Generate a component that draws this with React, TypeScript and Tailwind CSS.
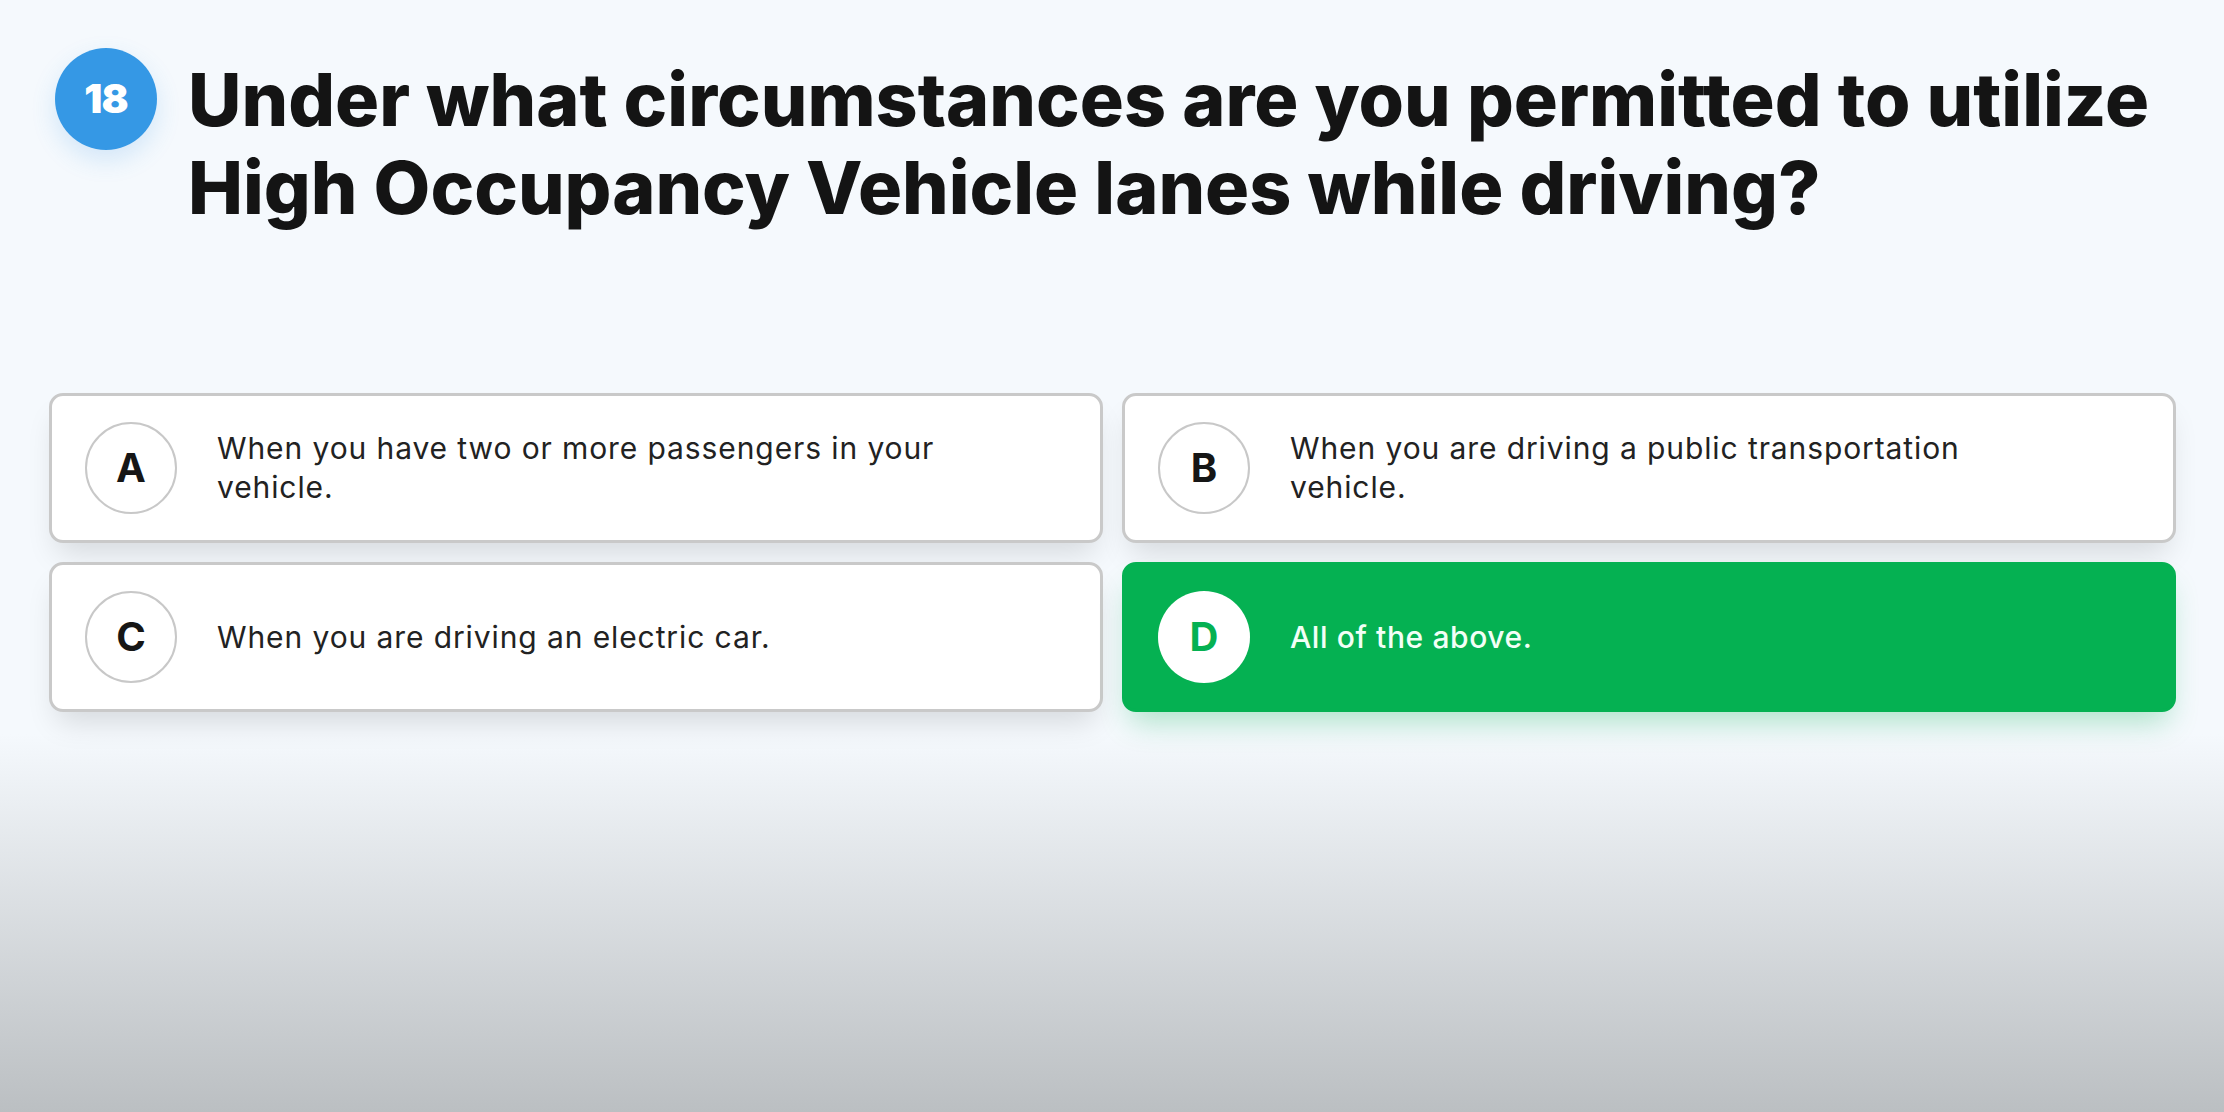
const options = [
  { letter: "A", lines: ["When you have two or more passengers in your", "vehicle."] },
  { letter: "B", lines: ["When you are driving a public transportation", "vehicle."] },
  { letter: "C", lines: ["When you are driving an electric car."] },
  { letter: "D", lines: ["All of the above."], correct: true },
];

export default function App() {
  return (
    <div className="flex h-[1112px] w-full flex-col bg-[linear-gradient(to_bottom,#f5f9fd_0%,#f5f9fd_66%,#bbbfc2_100%)] font-['Inter',sans-serif]">
      {/* QUESTION HEADER */}
      <div className="flex items-start gap-[31px] pl-[55px] pt-[48px]">
        <div className="flex h-[102px] w-[102px] shrink-0 items-center justify-center rounded-full bg-[#3598e5] text-[40px] font-black tracking-[-0.02em] text-white shadow-[0_10px_24px_rgba(53,152,229,0.18)]">
          18
        </div>
        <h1 className="mt-[8px] text-[73.5px] font-extrabold leading-[88px] text-[#141414]">
          Under what circumstances are you permitted to utilize
          <br />
          High Occupancy Vehicle lanes while driving?
        </h1>
      </div>

      {/* ANSWER OPTIONS */}
      <div className="mt-[161px] grid grid-cols-2 gap-[19px] pl-[49px] pr-[48px]">
        {options.map((opt) => (
          <div
            key={opt.letter}
            className={
              opt.correct
                ? "flex h-[150px] items-center gap-[40px] rounded-[14px] border-[3px] border-[#05b152] bg-[#05b152] pl-[33px] shadow-[0_18px_30px_-8px_rgba(5,177,82,0.3)]"
                : "flex h-[150px] items-center gap-[40px] rounded-[14px] border-[3px] border-[#c9c9c9] bg-white pl-[33px] shadow-[0_18px_30px_-8px_rgba(0,0,0,0.13)]"
            }
          >
            <div
              className={
                opt.correct
                  ? "flex h-[92px] w-[92px] shrink-0 items-center justify-center rounded-full bg-white text-[40px] font-bold text-[#05b152]"
                  : "flex h-[92px] w-[92px] shrink-0 items-center justify-center rounded-full border-2 border-[#c8c8c8] bg-white text-[40px] font-bold text-[#161616]"
              }
            >
              {opt.letter}
            </div>
            <p
              className={
                opt.correct
                  ? "text-[30px] font-medium leading-[39px] tracking-[0.02em] text-[#f2fff6]"
                  : "text-[30px] leading-[39px] tracking-[0.03em] text-[#222222]"
              }
            >
              {opt.lines.map((line, i) => (
                <span key={i} className="block">
                  {line}
                </span>
              ))}
            </p>
          </div>
        ))}
      </div>
    </div>
  );
}
